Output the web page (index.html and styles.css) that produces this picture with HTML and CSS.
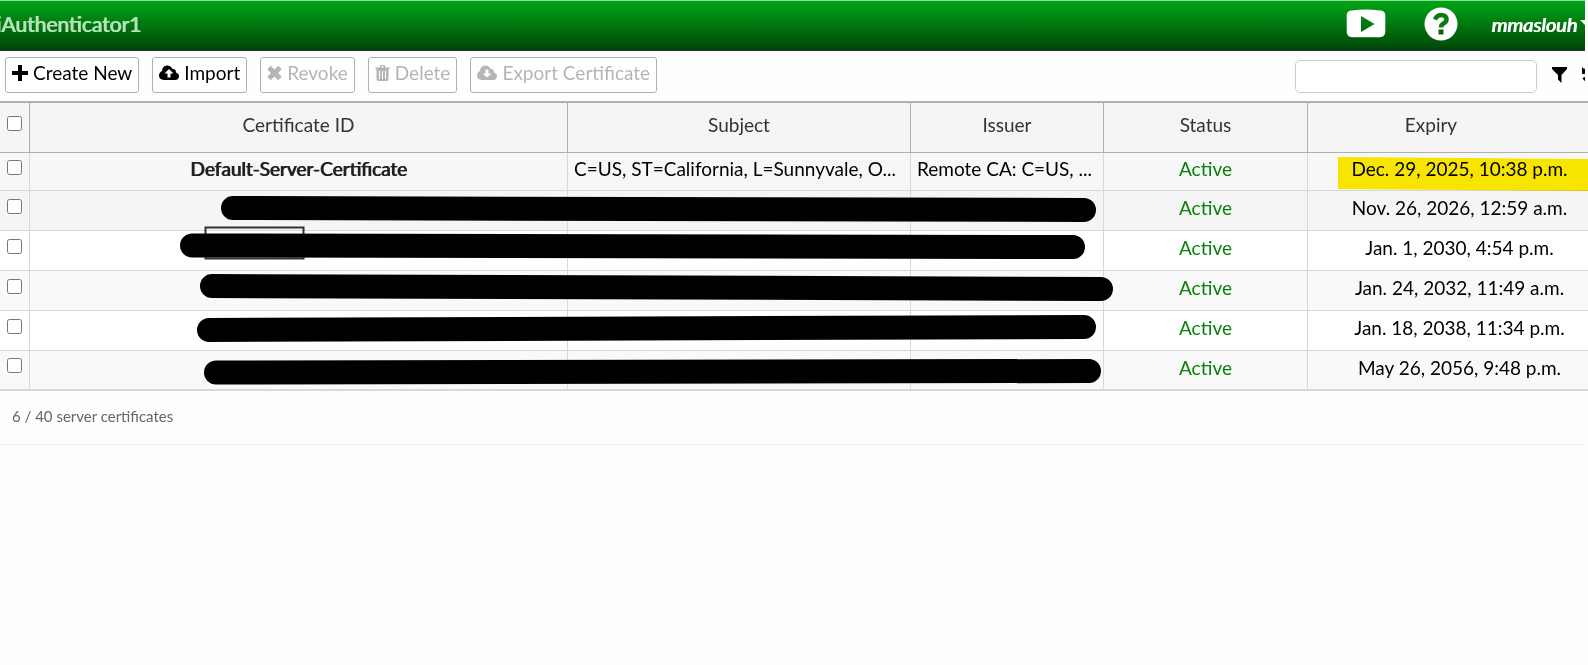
FILE: index.html
```html
<!DOCTYPE html>
<html lang="en">
<head>
  <meta charset="utf-8">
  <title>Server Certificates</title>
  <link rel="stylesheet" href="styles.css">
</head>
<body>
  <div class="page">
    <header class="topbar">
      <h1 class="brand">iAuthenticator1</h1>
      <nav class="top-links">
        <a href="#" class="icon-link" aria-label="Videos">
          <svg width="40" height="30" viewBox="0 0 40 30">
            <path fill="#fff" fill-rule="evenodd" d="M6 1.500Q20 -.3 34 1.500Q39 1.500 39.300 6V23Q39 28 34 28.300H6Q1 28 .7 23V6Q1 1.500 6 1.500ZM15 7V23L28.500 15Z"/>
          </svg>
        </a>
        <a href="#" class="icon-link" aria-label="Help">
          <svg width="34" height="34" viewBox="0 0 34 34">
            <circle cx="17" cy="17" r="16.500" fill="#fff"/>
            <path d="M11 12.500Q13 8 17.500 8Q22.500 8.500 22.500 12.500Q22.500 15 19.500 16.500Q17 18 17 20.500" fill="none" stroke="#087d10" stroke-width="4.500"/>
            <path fill="#06600b" d="M14.500 22.500h5v5h-5z"/>
          </svg>
        </a>
        <a href="#" class="user">mmaslouh
          <svg width="14" height="8" viewBox="0 0 14 8"><path fill="#fff" d="M0 0h14L7 7z"/></svg>
        </a>
      </nav>
    </header>

    <div class="toolbar">
      <button type="button" class="btn">
        <svg width="16" height="16" viewBox="0 0 16 16"><path fill="currentColor" d="M6 0h4v6h6v4h-6v6H6v-6H0V6h6z"/></svg>
        Create New
      </button>
      <button type="button" class="btn">
        <svg width="20" height="16" viewBox="0 0 20 16"><path fill="currentColor" fill-rule="evenodd" d="M5 15Q0 14.500 0 10.500Q0 7.500 3 6Q3 1 8 .5Q12 .5 13.500 4Q17 3.500 17 7.500Q20 8.500 20 11.500Q19.500 15 16 15ZM10 4L5.500 8.500H8.500V12.500H11.500V8.500H14.500Z"/></svg>
        Import
      </button>
      <button type="button" class="btn" disabled>
        <svg width="15" height="16" viewBox="0 0 15 16"><path stroke="currentColor" stroke-width="5" d="M2 2.500l11 11M13 2.500L2 13.500"/></svg>
        Revoke
      </button>
      <button type="button" class="btn" disabled>
        <svg width="15" height="16" viewBox="0 0 14 16"><path fill="currentColor" fill-rule="evenodd" d="M0 2.500H4L5 0H9L10 2.500H14V4.500H13V14Q13 16 11 16H3Q1 16 1 14V4.500H0ZM5.500 2.500h3L8 1.300H6ZM3.500 6v8h1V6ZM6.500 6v8h1V6ZM9.500 6v8h1V6Z"/></svg>
        Delete
      </button>
      <button type="button" class="btn" disabled>
        <svg width="20" height="16" viewBox="0 0 20 16"><path fill="currentColor" fill-rule="evenodd" d="M5 15Q0 14.500 0 10.500Q0 7.500 3 6Q3 1 8 .5Q12 .5 13.500 4Q17 3.500 17 7.500Q20 8.500 20 11.500Q19.500 15 16 15ZM10 12.500L5.500 8.500H8.500V4.500H11.500V8.500H14.500Z"/></svg>
        Export Certificate
      </button>
      <div class="search-tools">
        <input type="text" class="search" aria-label="Search">
        <button type="button" class="icon-btn" aria-label="Filter">
          <svg width="15" height="16" viewBox="0 0 15 16"><path d="M0 0h15v2L9.500 8v8L6 12.500V8L0 2z"/></svg>
        </button>
        <button type="button" class="icon-btn" aria-label="Reset">
          <svg width="16" height="16" viewBox="0 0 16 16"><path d="M0 0l2 2Q5 0 8 0a8 8 0 1 1-7.500 11L3 10a5.200 5.200 0 1 0 1-6l3 3H0z"/></svg>
        </button>
      </div>
    </div>

    <main class="certs">
      <table class="cert-table">
        <colgroup>
          <col class="col-check">
          <col>
          <col class="col-subject">
          <col class="col-issuer">
          <col class="col-status">
          <col class="col-expiry">
        </colgroup>
        <thead>
          <tr>
            <th><input type="checkbox" aria-label="Select all"></th>
            <th>Certificate ID</th>
            <th>Subject</th>
            <th>Issuer</th>
            <th>Status</th>
            <th class="expiry-head">Expiry</th>
          </tr>
        </thead>
        <tbody>
          <tr class="default-row">
            <td><input type="checkbox" aria-label="Select Default-Server-Certificate"></td>
            <td class="default-name">Default-Server-Certificate</td>
            <td class="clip">C=US, ST=California, L=Sunnyvale, O...</td>
            <td class="clip">Remote CA: C=US, ...</td>
            <td class="active">Active</td>
            <td>Dec. 29, 2025, 10:38 p.m.</td>
          </tr>
          <tr class="shaded">
            <td><input type="checkbox" aria-label="Select certificate 2"></td>
            <td></td><td></td><td></td>
            <td class="active">Active</td>
            <td>Nov. 26, 2026, 12:59 a.m.</td>
          </tr>
          <tr>
            <td><input type="checkbox" aria-label="Select certificate 3"></td>
            <td></td><td></td><td></td>
            <td class="active">Active</td>
            <td>Jan. 1, 2030, 4:54 p.m.</td>
          </tr>
          <tr class="odd">
            <td><input type="checkbox" aria-label="Select certificate 4"></td>
            <td></td><td></td><td></td>
            <td class="active">Active</td>
            <td>Jan. 24, 2032, 11:49 a.m.</td>
          </tr>
          <tr>
            <td><input type="checkbox" aria-label="Select certificate 5"></td>
            <td></td><td></td><td></td>
            <td class="active">Active</td>
            <td>Jan. 18, 2038, 11:34 p.m.</td>
          </tr>
          <tr class="odd">
            <td><input type="checkbox" aria-label="Select certificate 6"></td>
            <td></td><td></td><td></td>
            <td class="active">Active</td>
            <td>May 26, 2056, 9:48 p.m.</td>
          </tr>
        </tbody>
      </table>

      <!-- marker over the expiring date -->
      <svg class="marker" width="250" height="36" viewBox="0 0 250 36"><path fill="#ffed00" d="M0 1L250 3V35L0 33Z"/></svg>

      <!-- blacked out names -->
      <svg class="redactions" width="1120" height="290" viewBox="0 0 1120 290">
        <rect x="205.500" y="126.500" width="98" height="31" fill="none" stroke="#333" stroke-width="2"/>
        <g stroke="#000" stroke-width="24" stroke-linecap="round">
          <path d="M233 107L1084 109"/>
          <path d="M192 144.500L1073 146"/>
          <path d="M212 185L1101 188"/>
          <path d="M209 229L1084 226"/>
          <path d="M216 271.500L1089 270"/>
        </g>
      </svg>
    </main>

    <footer class="count">6 / 40 server certificates</footer>
  </div>
</body>
</html>
```
FILE: styles.css
```css
* {
  box-sizing: border-box;
}

body {
  margin: 0;
  background: #fefefe;
  color: #000;
  font-family: Lato, "Liberation Sans", sans-serif;
  font-size: 19px;
}

.page {
  overflow: hidden;
}

.topbar {
  display: flex;
  align-items: center;
  justify-content: space-between;
  height: 51px;
  margin-right: 3px;
  padding-bottom: 3px;
  overflow: hidden;
  border-top: 1px solid #8fdc98;
  border-bottom: 1px solid #333;
  background: linear-gradient(#00a616, #004506);
}

.brand {
  margin: 0 0 2px -4px;
  color: #b5e2b8;
  font-size: 21px;
  font-weight: normal;
  text-shadow: 1px 0 #b5e2b8;
}

.top-links {
  display: flex;
  align-items: center;
  gap: 38px;
  margin-right: -9px;
}

.icon-link,
.icon-link svg {
  display: block;
}

.user {
  display: flex;
  align-items: center;
  gap: 3px;
  margin-left: -5px;
  color: #fff;
  font-size: 20px;
  font-style: italic;
  text-decoration: none;
  text-shadow: 1px 0 #fff;
}

.toolbar {
  display: flex;
  align-items: center;
  gap: 13px;
  height: 50px;
  margin-right: 3px;
  padding-left: 5px;
  overflow: hidden;
}

.btn {
  display: flex;
  align-items: center;
  gap: 5px;
  height: 36px;
  margin-bottom: 2px;
  padding: 0 6px 5px;
  border: 1px solid #b0b0b0;
  border-radius: 3px;
  background: #fff;
  color: #000;
  font: inherit;
  white-space: nowrap;
}

.btn:disabled {
  color: #b5b5b5;
}

.search-tools {
  display: flex;
  align-items: center;
  gap: 15px;
  margin-left: auto;
  margin-right: -13px;
}

.search {
  width: 242px;
  height: 33px;
  border: 1px solid #ccc;
  border-radius: 5px;
  background: #fff;
  font: inherit;
}

.icon-btn {
  padding: 0 0 3px;
  border: 0;
  background: none;
}

.icon-btn svg {
  display: block;
}

.certs {
  position: relative;
}

.cert-table {
  width: calc(100% + 24px);
  table-layout: fixed;
  border-collapse: separate;
  border-spacing: 0;
  border-top: 2px solid #b0b0b0;
  border-bottom: 1px solid #d8d8d8;
}

.col-check {
  width: 30px;
}

.col-subject {
  width: 343px;
}

.col-issuer {
  width: 193px;
}

.col-status {
  width: 204px;
}

.col-expiry {
  width: 304px;
}

th,
td {
  padding: 0 7px;
  border-right: 1px solid #d8d8d8;
  border-bottom: 1px solid #d8d8d8;
  text-align: center;
  white-space: nowrap;
}

th {
  height: 50px;
  padding-bottom: 7px;
  border-color: #b0b0b0;
  background: #f5f5f5;
  color: #333;
  font-weight: normal;
}

td {
  height: 40px;
  padding-bottom: 6px;
  background: #fff;
}

.default-row td {
  height: 38px;
  background: #f7f7f7;
}

tr:last-child td {
  height: 39px;
}

.shaded td {
  background: #f5f5f5;
}

.odd td {
  background: #f9f9f9;
}

th:first-child,
td:first-child {
  padding: 0 0 9px;
}

.expiry-head {
  padding-right: 64px;
}

.default-name {
  color: #222;
  text-shadow: 1px 0 #222;
}

.clip {
  padding-right: 0;
  padding-left: 6px;
  text-align: left;
}

.active {
  color: #0a800a;
}

input[type="checkbox"] {
  display: block;
  width: 15px;
  height: 15px;
  margin: 0 0 0 7px;
}

.marker {
  position: absolute;
  top: 55px;
  right: 0;
  mix-blend-mode: multiply;
}

.redactions {
  position: absolute;
  top: 0;
  left: 0;
}

.count {
  margin-right: 3px;
  padding: 15px 12px 17px;
  border-bottom: 1px solid #eee;
  color: #666;
  font-size: 15px;
  line-height: 21px;
}
```
